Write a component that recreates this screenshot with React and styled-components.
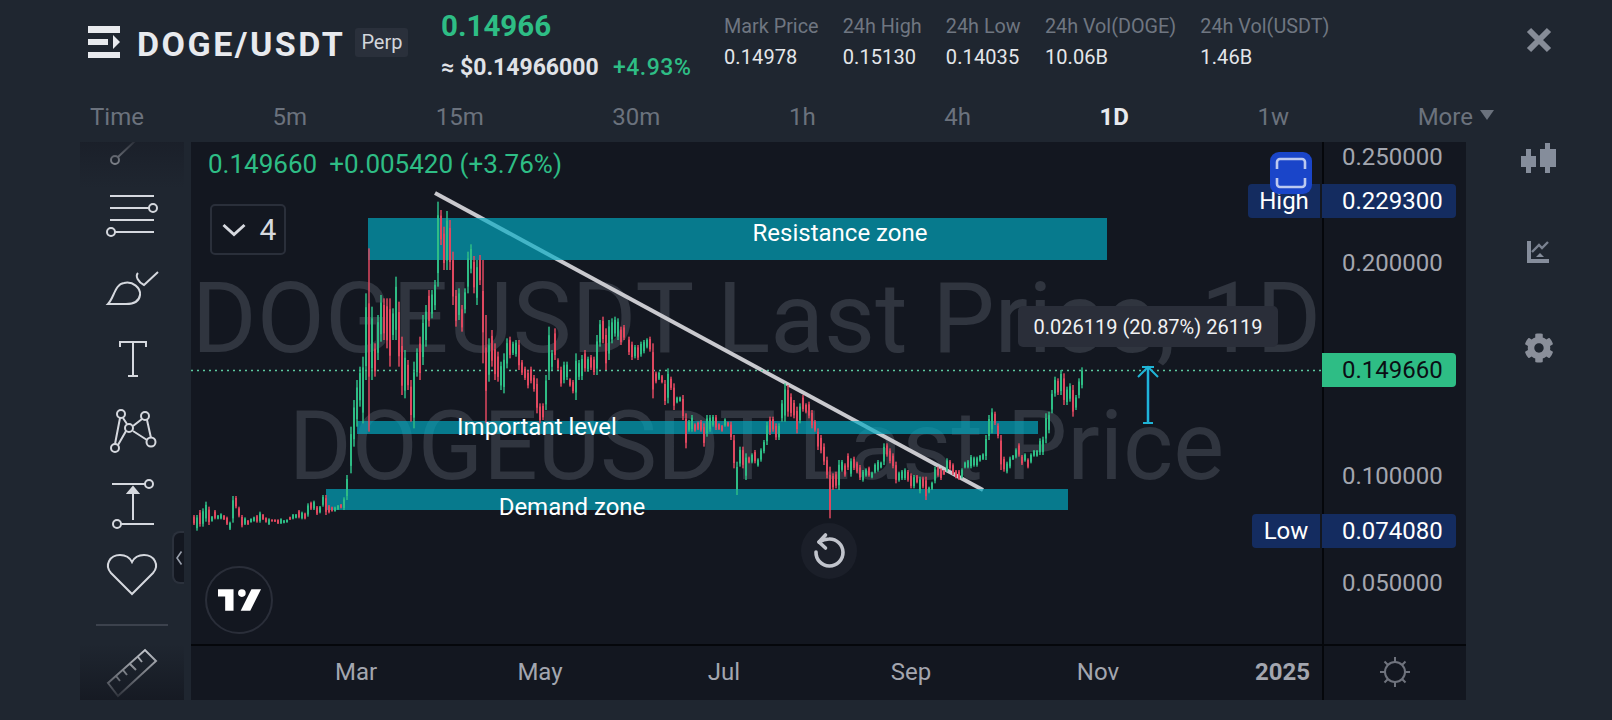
import React from "react";
import styled, { createGlobalStyle } from "styled-components";
import { FaCog } from "react-icons/fa";

const PLOT_X = 191;
const PLOT_Y = 142;

// price series read off the chart: colour, wick top and bottom
const SEGMENTS = [
  [193, 400, "r345-375 g345-392 r330-380 g325-380 g305-365 r320-375 g348-365 r330-358 g345-358 g340-358 r345-360 r350-375 g365-390 g288-368 r288-325 r320-352 r345-382 g352-375 r360-375 g355-368 g350-365 r345-368 g335-368 r342-360 r352-368 g355-375 r358-365 r358-366 r358-372 g355-372 g360-370 g358-368 r350-360 g342-358 g342-355 r330-355 g335-358 r338-358 g310-350 r305-330 g302-330 r318-345 g318-340 g285-320 r285-345 r315-340 r320-335 g320-335 g315-330 r312-325 g292-330 g225-300"],
  [350, 180, "g740-880 g660-800 g600-740 g560-680 g530-730 g340-600 r205-755 g380-600 r490-590 g405-540 g345-485 r355-480 r355-505 r355-560 g385-480 g290-480 r365-560 r470-645 g510-655 r540-630 r600-725 g545-745 g505-590 r470-600 g405-555 g375-500 r330-440 g330-415 g300-390 g65-320 r90-195 r140-270 g93-270 r120-270 r215-375 r330-440 g325-420 r375-455 g325-400 g215-340 g193-280 r228-340 g240-375 r225-315 r240-550 r405-730 g475-605 r450-560 r490-600 r515-605 g545-630 g520-640 g475-565 r470-535 g485-525 g480-530 r480-570 r540-585 r560-600 r570-625 r560-610 r585-635 r595-700 r670-730 r670-720 g585-690 g440-600 g510-570 r445-540 r535-570 r560-620 g545-610 g545-600 r595-620 r600-640 g520-660 g540-600 g525-600 r510-575 g530-575 r525-570 r530-585 g465-585 g420-500 r410-490 r445-570 g420-540 g415-490 g410-470 g415-480 r440-495 r435-480"],
  [628, 280, "r170-225 r185-240 g195-235 r195-240 g185-230 g180-220 g175-205 r170-215 r190-355 r275-310 g275-300 r285-310 r300-375 g265-370 r290-330 r310-390 g350-370 g350-365 r345-420 r400-505 g420-455 g405-455 r430-455 r425-450 r420-455 r430-500 g405-470 g405-455 g405-440 r405-450 r430-450 r435-455 g415-440 r425-440 r425-480 r465-565 g545-645 g500-560 r500-565 g520-600 r530-550 g520-550 r510-550 g535-560 g505-545 g480-520 g425-495 r410-465 r410-455 r430-480 g430-480 g360-425 g310-425 r315-410 r340-410 r360-415 r380-460 g370-430 r345-395 r370-400 r365-415 r390-445 r420-455 r445-510 r465-520 r490-555 r530-595 r560-715 r580-630 r575-625 g540-630 g540-575 r550-590 r520-570 g535-590 r530-570 r545-580 r555-600 g570-605 g565-590 r560-590 g575-595 g550-580 g540-575 g545-565 g490-555 r490-530 r505-550 r520-565 r545-610 g575-605 g570-600 g565-600 r570-605 r580-625 g585-625 r585-610 g590-640 r590-625 r590-660 g620-640 g605-630 g560-610 r560-590 r565-600 r570-585 g535-575 r540-570 r550-585 r570-595 r570-600 g565-595 g545-565 g540-565 g525-565 g530-560 g530-560 g525-545 g520-540 g465-540 g405-480 g385-460 r395-435 r430-475 r465-570 r530-575 g545-580 g530-565 g525-540 g505-535 r490-530 r525-555 g520-545 r535-565 g520-550 g510-530 g510-530 g475-525 g470-525 g400-490 g395-460 g330-400 g290-350 r295-345 g270-345 r280-375 g320-375 g310-365 r315-410 g345-390 g295-355 g262-325"],
];

const CANDLES = SEGMENTS.flatMap(([x0, y0, series]) =>
  series.split(" ").map((entry, i) => {
    const [top, bottom] = entry.slice(1).split("-").map(Number);
    return {
      x: x0 + i * 3,
      top: y0 + top / 3,
      bottom: y0 + bottom / 3,
      color: entry[0] === "g" ? "#2ebd85" : "#e0485f",
    };
  })
);

const ZONES = [
  { x: 368, y: 218, w: 739, h: 42 },
  { x: 357, y: 421, w: 681, h: 13 },
  { x: 326, y: 489, w: 742, h: 21 },
];

const TABS = ["Time", "5m", "15m", "30m", "1h", "4h", "1D", "1w"];
const MONTHS = [
  ["Mar", 184],
  ["May", 184],
  ["Jul", 184],
  ["Sep", 190],
  ["Nov", 184],
];
const STATS = [
  ["Mark Price", "0.14978"],
  ["24h High", "0.15130"],
  ["24h Low", "0.14035"],
  ["24h Vol(DOGE)", "10.06B"],
  ["24h Vol(USDT)", "1.46B"],
];
const TICKS = [
  ["0.250000", 157],
  ["0.200000", 263],
  ["0.100000", 476],
  ["0.050000", 583],
];

const ToolIcon = ({ y, h, children }) => (
  <ToolSvg viewBox={`100 ${y} 64 ${h}`} width="64" height={h}>
    {children}
  </ToolSvg>
);

const Chart = () => (
  <PlotSvg viewBox={`${PLOT_X} ${PLOT_Y} 1131 503`} width="1131" height="503">
    <line x1="435" y1="193" x2="983" y2="490" stroke="#c9c9ce" strokeWidth="4" />
    {ZONES.map((z) => (
      <rect key={z.y} x={z.x} y={z.y} width={z.w} height={z.h} fill="#02acc4" fillOpacity="0.67" />
    ))}
    <line x1="191" y1="370.5" x2="1322" y2="370.5" stroke="#5cc9a0" strokeWidth="1.5" strokeDasharray="2 4" />
    {CANDLES.map((c) => {
      const h = c.bottom - c.top;
      const inset = h > 100 ? h * 0.3 : h * 0.16;
      return (
        <g key={c.x} fill={c.color}>
          <rect x={c.x + 0.25} y={c.top} width="1.5" height={h} />
          <rect x={c.x} y={c.top + inset} width="2" height={h - inset * 2} />
        </g>
      );
    })}
    <rect x="1146" y="370" width="4" height="52" fill="#123a5c" />
    <g stroke="#1fb4d6" strokeWidth="2" fill="none">
      <path d="M1148 367V422M1143 423H1153M1138 377L1148 367L1158 377M1142 367H1154" />
    </g>
  </PlotSvg>
);

export default function App() {
  return (
    <Page>
      <GlobalStyle />
      <TopRow>
        <SymbolBlock>
          <svg width="32" height="32" viewBox="0 0 32 32" fill="#e8eaee">
            <rect x="0" y="0" width="32" height="7" />
            <rect x="0" y="13" width="20" height="6" />
            <path d="M25 9L32 16L25 23Z" />
            <rect x="0" y="26" width="32" height="6" />
          </svg>
          <Title>DOGE/USDT</Title>
          <Badge>Perp</Badge>
        </SymbolBlock>
        <PriceBlock>
          <LastPrice>0.14966</LastPrice>
          <PriceRow>
            <UsdPrice>≈ $0.14966000</UsdPrice>
            <Change>+4.93%</Change>
          </PriceRow>
        </PriceBlock>
        <Stats>
          {STATS.map(([label, value]) => (
            <Stat key={label}>
              <StatLabel>{label}</StatLabel>
              <StatValue>{value}</StatValue>
            </Stat>
          ))}
        </Stats>
        <CloseIcon viewBox="0 0 26 26" width="26" height="26">
          <path d="M3 3L23 23M23 3L3 23" />
        </CloseIcon>
      </TopRow>

      <TabRow>
        {TABS.map((t) => (
          <Tab key={t} $active={t === "1D"}>
            {t}
          </Tab>
        ))}
        <Tab>
          More <MoreArrow />
        </Tab>
      </TabRow>

      <Body>
        <Toolbar>
          <ToolIcon y={142} h={36}>
            <circle cx="115" cy="160" r="4" />
            <path d="M118 157L136 140" />
          </ToolIcon>
          <ToolIcon y={178} h={72}>
            <path d="M110 196H154M110 208H149M110 220H154M115 232H154" />
            <circle cx="153" cy="208" r="4" />
            <circle cx="111" cy="232" r="4" />
          </ToolIcon>
          <ToolIcon y={250} h={76}>
            <path d="M108 304C114 298 115 284 124 283C133 281 141 288 140 295C139 302 132 304 126 304Z" />
            <path d="M138 273C135 276 138 282 144 285L158 272" />
          </ToolIcon>
          <ToolIcon y={326} h={66}>
            <path d="M120 347V342H146V347M133 342V376M128 376H138" />
          </ToolIcon>
          <ToolIcon y={392} h={78}>
            <path d="M120 418L115 444M123 418L127 424M118 445L126 431M133 426L142 419M147 420L151 438M133 431L147 440" />
            <circle cx="121" cy="414" r="4" />
            <circle cx="145" cy="416" r="4" />
            <circle cx="129" cy="428" r="4" />
            <circle cx="151" cy="442" r="4.5" />
            <circle cx="115" cy="448" r="4" />
          </ToolIcon>
          <ToolIcon y={470} h={68}>
            <path d="M112 484H145M133 520V492M121 524H154" />
            <path d="M128 493L133 487L138 493Z" fill="#d5d8de" />
            <circle cx="149" cy="484" r="4" />
            <circle cx="117" cy="524" r="4" />
          </ToolIcon>
          <ToolIcon y={538} h={74}>
            <path d="M132 594L111 573C104 565 110 555 120 555C126 555 130 558 132 562C134 558 138 555 144 555C154 555 160 565 153 573Z" />
          </ToolIcon>
          <ToolDivider />
          <ToolIcon y={646} h={54}>
            <path d="M108 683L145 650L156 661L118 696ZM116 676L120 681M123 670L127 675M130 664L136 670M138 657L142 662" />
          </ToolIcon>
          <TopFade />
          <BottomFade />
          <CollapseHandle>
            <svg viewBox="0 0 8 16" width="8" height="16" fill="none" stroke="#9aa1ad" strokeWidth="1.6">
              <path d="M6.5 1.5L2 8L6.5 14.5" />
            </svg>
          </CollapseHandle>
        </Toolbar>

        <ChartPane>
          <ChartRow>
            <Plot>
              <Watermark>
                <WatermarkLine $size={99}>DOGEUSDT Last Price, 1D</WatermarkLine>
                <WatermarkLine $size={96}>DOGEUSDT Last Price</WatermarkLine>
              </Watermark>
              <Chart />
              <Legend>
                <span>0.149660</span>
                <span>+0.005420 (+3.76%)</span>
              </Legend>
              <Collapse>
                <svg viewBox="0 0 24 14" width="24" height="14" fill="none" stroke="#d6d9df" strokeWidth="3">
                  <path d="M1.5 2L12 11.5L22.5 2" />
                </svg>
                <span>4</span>
              </Collapse>
              <ZoneLabel $x={840} $y={233}>Resistance zone</ZoneLabel>
              <ZoneLabel $x={537} $y={427}>Important level</ZoneLabel>
              <ZoneLabel $x={572} $y={507}>Demand zone</ZoneLabel>
              <Tooltip>0.026119 (20.87%) 26119</Tooltip>
              <ExtremeLabel $y={184} $w={72}>High</ExtremeLabel>
              <ExtremeLabel $y={514} $w={68}>Low</ExtremeLabel>
              <FullscreenButton>
                <svg viewBox="0 0 42 42" width="42" height="42" fill="none" stroke="#bcc9f0" strokeWidth="2.6">
                  <path d="M7 17V10A3 3 0 0 1 10 7H32A3 3 0 0 1 35 10V17M7 26V32A3 3 0 0 0 10 35H32A3 3 0 0 0 35 32V26" />
                </svg>
              </FullscreenButton>
              <ResetButton>
                <svg viewBox="0 0 56 56" width="56" height="56" fill="none" stroke="#c1c4cc" strokeWidth="3.6" strokeLinecap="round" strokeLinejoin="round">
                  <path d="M15 29A13.5 13.5 0 1 0 28 16Q23 16 18 19" />
                  <path d="M24.5 12L18 19L24.5 25" />
                </svg>
              </ResetButton>
              <LogoBadge>
                <svg viewBox="0 0 36 18" width="43" height="22" fill="#fff">
                  <path d="M13 0H0V6H6V18H13Z" />
                  <circle cx="20" cy="3.2" r="3.2" />
                  <path d="M28 0H36L27 18H19Z" />
                </svg>
              </LogoBadge>
            </Plot>
            <PriceAxis>
              {TICKS.map(([label, y]) => (
                <AxisPrice key={label} $y={y}>
                  {label}
                </AxisPrice>
              ))}
              <PriceTag $y={184} $bg="#142c60" $fg="#fff">0.229300</PriceTag>
              <PriceTag $y={353} $bg="#2ebd85" $fg="#0b0e14">0.149660</PriceTag>
              <PriceTag $y={514} $bg="#142c60" $fg="#fff">0.074080</PriceTag>
            </PriceAxis>
          </ChartRow>
          <TimeRow>
            <TimeAxis>
              {MONTHS.map(([m, w]) => (
                <Month key={m} $w={w}>{m}</Month>
              ))}
              <YearLabel>2025</YearLabel>
            </TimeAxis>
            <SunCell>
              <svg viewBox="0 0 32 32" width="32" height="32" fill="none" stroke="#6f737d" strokeWidth="2">
                <circle cx="16" cy="16" r="10" />
                <path d="M16 1V6M16 26V31M1 16H6M26 16H31M5.5 5.5L9 9M23 23L26.5 26.5M26.5 5.5L23 9M9 23L5.5 26.5" />
              </svg>
            </SunCell>
          </TimeRow>
        </ChartPane>

        <SideBar>
          <SideIcon viewBox="1520 142 40 32" width="40" height="32">
            <path d="M1527 149H1532V156H1537V167H1532V173H1527V167H1522V156H1527Z" />
            <path d="M1546 143H1551V149H1557V167H1551V173H1546V167H1541V149H1546Z" />
          </SideIcon>
          <SideIcon viewBox="1520 237 40 32" width="40" height="32">
            <path d="M1528 241H1532V259H1550V263H1528Z" />
            <path d="M1533 252L1540 245L1543 248L1549 242" fill="none" stroke="#7a8290" strokeWidth="2.4" />
            <path d="M1541 253L1545 257H1537Z" />
          </SideIcon>
          <GearSlot>
            <FaCog size={30} />
          </GearSlot>
        </SideBar>
      </Body>
    </Page>
  );
}

const GlobalStyle = createGlobalStyle`
  html, body {
    margin: 0;
    padding: 0;
    height: 720px;
    overflow: hidden;
    background: #1f2630;
    font-family: Roboto, "Liberation Sans", sans-serif;
  }
`;

const Page = styled.div`
  width: 1612px;
  height: 720px;
  overflow: hidden;
  background: #1f2630;
  color: #e8eaee;
`;

const TopRow = styled.header`
  display: flex;
  align-items: flex-start;
  height: 92px;
  padding-left: 88px;
  box-sizing: border-box;
`;

const SymbolBlock = styled.div`
  display: flex;
  align-items: center;
  gap: 17px;
  width: 353px;
  margin-top: 24px;
`;

const Title = styled.div`
  font-size: 34px;
  font-weight: 700;
  letter-spacing: 2.5px;
  line-height: 32px;
  margin-top: 4px;
`;

const Badge = styled.span`
  margin-left: -7px;
  padding: 0 6px;
  height: 29px;
  line-height: 29px;
  border-radius: 3px;
  background: #2a303b;
  color: #d3d6dc;
  font-size: 20px;
`;

const PriceBlock = styled.div`
  width: 283px;
  padding-top: 9px;
`;

const LastPrice = styled.div`
  color: #2ebd85;
  font-size: 29.5px;
  font-weight: 700;
  line-height: 34px;
`;

const PriceRow = styled.div`
  display: flex;
  gap: 17px;
  margin-top: 12px;
  font-size: 23px;
  font-weight: 700;
  line-height: 26px;
`;

const UsdPrice = styled.span`
  color: #e0e2e7;
  width: 155px;
  white-space: nowrap;
`;

const Change = styled.span`
  color: #2ebd85;
  font-weight: 500;
  letter-spacing: 0.5px;
`;

const Stats = styled.div`
  display: flex;
  gap: 24.2px;
  padding-top: 15px;
`;

const Stat = styled.div`
  display: flex;
  flex-direction: column;
  gap: 7px;
`;

const StatLabel = styled.span`
  color: #6f7681;
  font-size: 19.8px;
  line-height: 24px;
  white-space: nowrap;
`;

const StatValue = styled.span`
  color: #e4e6ea;
  font-size: 20px;
  font-weight: 400;
  letter-spacing: 0.1px;
  line-height: 22px;
`;

const CloseIcon = styled.svg`
  margin: 27px 60px 0 auto;
  fill: none;
  stroke: #868c97;
  stroke-width: 6;
`;

const TabRow = styled.nav`
  display: flex;
  justify-content: space-between;
  align-items: center;
  height: 50px;
  padding: 0 118px 0 90px;
  box-sizing: border-box;
`;

const Tab = styled.span`
  display: flex;
  align-items: center;
  gap: 7px;
  font-size: 24px;
  font-weight: ${(p) => (p.$active ? 700 : 400)};
  color: ${(p) => (p.$active ? "#e8eaee" : "#6b727d")};
`;

const MoreArrow = styled.i`
  width: 0;
  height: 0;
  border-left: 7px solid transparent;
  border-right: 7px solid transparent;
  border-top: 10px solid #6b727d;
  margin-top: -5px;
`;

const Body = styled.main`
  display: flex;
  height: 558px;
  padding-left: 80px;
`;

const Toolbar = styled.aside`
  position: relative;
  width: 104px;
  height: 558px;
  margin-right: 7px;
  display: flex;
  flex-direction: column;
  align-items: center;
`;

const ToolSvg = styled.svg`
  display: block;
  flex: none;
  fill: none;
  stroke: #d5d8de;
  stroke-width: 2;
`;

const ToolDivider = styled.div`
  flex: none;
  width: 72px;
  height: 2px;
  margin: 12px 0 20px;
  background: #3c424d;
`;

const TopFade = styled.div`
  position: absolute;
  left: 0;
  right: 0;
  top: 0;
  height: 46px;
  background: linear-gradient(rgba(26, 31, 41, 0.9), rgba(31, 38, 48, 0));
`;

const BottomFade = styled.div`
  position: absolute;
  left: 0;
  right: 0;
  bottom: 0;
  height: 56px;
  background: linear-gradient(rgba(31, 38, 48, 0), rgba(21, 25, 34, 0.92));
`;

const CollapseHandle = styled.div`
  position: absolute;
  right: 0;
  top: 389px;
  width: 12px;
  height: 53px;
  box-sizing: border-box;
  display: flex;
  align-items: center;
  justify-content: center;
  border: 2px solid #2b313c;
  border-right: 0;
  border-radius: 8px 0 0 8px;
  background: #131720;
`;

const ChartPane = styled.section`
  width: 1275px;
  height: 558px;
  display: flex;
  flex-direction: column;
  background: #131720;
`;

const ChartRow = styled.div`
  display: flex;
  height: 502px;
`;

const Plot = styled.div`
  position: relative;
  width: 1131px;
  height: 502px;
  overflow: hidden;
`;

const PlotSvg = styled.svg`
  position: absolute;
  left: 0;
  top: 0;
`;

const Watermark = styled.div`
  position: absolute;
  left: 0;
  right: 0;
  top: 112px;
  display: flex;
  flex-direction: column;
  align-items: center;
  color: #30353f;
  white-space: nowrap;
`;

const WatermarkLine = styled.div`
  font-size: ${(p) => p.$size}px;
  line-height: 128px;
`;

const Legend = styled.div`
  position: absolute;
  left: 17px;
  top: 7px;
  display: flex;
  gap: 12px;
  color: #2ebd85;
  font-size: 26px;
  line-height: 30px;
`;

const Collapse = styled.div`
  position: absolute;
  left: 19px;
  top: 62px;
  width: 76px;
  height: 51px;
  box-sizing: border-box;
  padding-left: 2px;
  display: flex;
  align-items: center;
  justify-content: center;
  gap: 14px;
  border: 2px solid #2a2f3a;
  border-radius: 5px;
  color: #d6d9df;
  font-size: 30px;
`;

const ZoneLabel = styled.div`
  position: absolute;
  left: ${(p) => p.$x - PLOT_X}px;
  top: ${(p) => p.$y - PLOT_Y}px;
  transform: translate(-50%, -50%);
  color: #fff;
  font-size: 24px;
  white-space: nowrap;
`;

const Tooltip = styled.div`
  position: absolute;
  left: 827px;
  top: 164px;
  width: 260px;
  height: 41px;
  display: flex;
  align-items: center;
  justify-content: center;
  border-radius: 5px;
  background: #2a2e39;
  color: #f1f2f4;
  font-size: 20px;
`;

const ExtremeLabel = styled.div`
  position: absolute;
  right: 2px;
  top: ${(p) => p.$y - PLOT_Y}px;
  width: ${(p) => p.$w}px;
  height: 34px;
  display: flex;
  align-items: center;
  justify-content: center;
  border-radius: 4px 0 0 4px;
  background: #142c60;
  color: #fff;
  font-size: 24px;
`;

const FullscreenButton = styled.div`
  position: absolute;
  left: 1079px;
  top: 10px;
  width: 42px;
  height: 42px;
  border-radius: 9px;
  background: #1a45c9;
`;

const ResetButton = styled.div`
  position: absolute;
  left: 610px;
  top: 381px;
  width: 56px;
  height: 56px;
  border-radius: 50%;
  background: #1b1f29;
`;

const LogoBadge = styled.div`
  position: absolute;
  left: 14px;
  top: 424px;
  width: 68px;
  height: 68px;
  box-sizing: border-box;
  display: flex;
  align-items: center;
  justify-content: center;
  border: 2px solid #2a2e39;
  border-radius: 50%;
`;

const PriceAxis = styled.div`
  position: relative;
  width: 144px;
  box-sizing: border-box;
  border-left: 2px solid #05070b;
`;

const AxisPrice = styled.div`
  position: absolute;
  left: 18px;
  top: ${(p) => p.$y - PLOT_Y - 15}px;
  color: #a3a6af;
  font-size: 24px;
  line-height: 30px;
`;

const PriceTag = styled.div`
  position: absolute;
  left: -2px;
  top: ${(p) => p.$y - PLOT_Y}px;
  width: 134px;
  height: 34px;
  box-sizing: border-box;
  padding-left: 20px;
  border-radius: 0 4px 4px 0;
  background: ${(p) => p.$bg};
  color: ${(p) => p.$fg};
  font-size: 24px;
  line-height: 34px;
`;

const TimeRow = styled.div`
  display: flex;
  height: 56px;
  box-sizing: border-box;
  border-top: 2px solid #05070b;
`;

const TimeAxis = styled.div`
  width: 1131px;
  display: flex;
  align-items: center;
  padding: 0 12px 3px 73px;
  box-sizing: border-box;
`;

const Month = styled.span`
  width: ${(p) => p.$w}px;
  text-align: center;
  color: #a3a6af;
  font-size: 24px;
`;

const YearLabel = styled.span`
  margin-left: auto;
  color: #a3a6af;
  font-size: 24px;
  font-weight: 700;
`;

const SunCell = styled.div`
  width: 144px;
  box-sizing: border-box;
  padding-bottom: 3px;
  display: flex;
  align-items: center;
  justify-content: center;
  border-left: 2px solid #05070b;
`;

const SideBar = styled.aside`
  width: 146px;
  display: flex;
  flex-direction: column;
  align-items: center;
  gap: 63px;
`;

const SideIcon = styled.svg`
  display: block;
  fill: #858d9b;
`;

const GearSlot = styled.div`
  display: flex;
  justify-content: center;
  align-items: center;
  height: 32px;
  color: #8a8f9a;
`;
